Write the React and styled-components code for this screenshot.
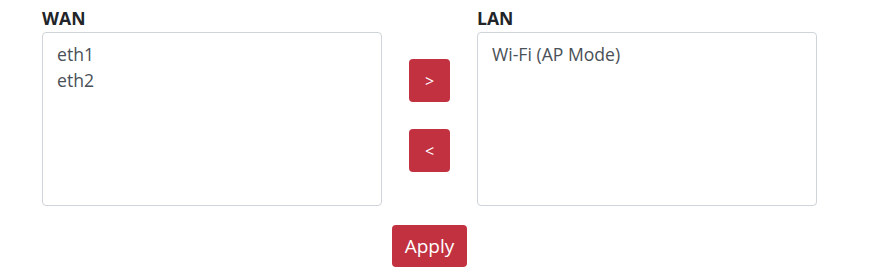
import React from "react";
import styled, { createGlobalStyle } from "styled-components";

const GlobalStyle = createGlobalStyle`
  body {
    margin: 0;
    background: #fff;
    font-family: "Open Sans", "Noto Sans", sans-serif;
    color: #212529;
  }
`;

const Page = styled.div`
  width: 775px;
  padding: 5px 0 0 42px;
  display: flex;
  flex-direction: column;
`;

const Row = styled.div`
  display: flex;
  align-items: flex-start;
`;

const Column = styled.div`
  width: 340px;
  display: flex;
  flex-direction: column;
`;

const Label = styled.label`
  font-size: 17.6px;
  font-weight: 700;
  line-height: 26px;
  margin-bottom: 1px;
  color: #212529;
`;

const ListBox = styled.ul`
  list-style: none;
  margin: 0;
  padding: 8px 14px;
  height: 174px;
  box-sizing: border-box;
  border: 1px solid #ced4da;
  border-radius: 4px;
`;

const Option = styled.li`
  font-size: 17.6px;
  line-height: 26px;
  color: #495057;
`;

const Middle = styled.div`
  width: 95px;
  display: flex;
  flex-direction: column;
  align-items: center;
  gap: 27px;
  padding-top: 54px;
`;

const Button = styled.button`
  border: none;
  border-radius: 4px;
  background: #c1313f;
  color: #fff;
  font-family: inherit;
  font-size: ${(p) => (p.$big ? "19px" : "16px")};
  width: ${(p) => (p.$big ? "75px" : "41px")};
  height: ${(p) => (p.$big ? "42px" : "43px")};
  padding: 0;
  cursor: pointer;
`;

const Footer = styled.div`
  display: flex;
  justify-content: center;
  padding-top: 19px;
`;

export default function App() {
  return (
    <>
      <GlobalStyle />
      <Page>
        <Row>
          <Column>
            <Label>WAN</Label>
            <ListBox>
              <Option>eth1</Option>
              <Option>eth2</Option>
            </ListBox>
          </Column>
          <Middle>
            <Button>&gt;</Button>
            <Button>&lt;</Button>
          </Middle>
          <Column>
            <Label>LAN</Label>
            <ListBox>
              <Option>Wi-Fi (AP Mode)</Option>
            </ListBox>
          </Column>
        </Row>
        <Footer>
          <Button $big>Apply</Button>
        </Footer>
      </Page>
    </>
  );
}
